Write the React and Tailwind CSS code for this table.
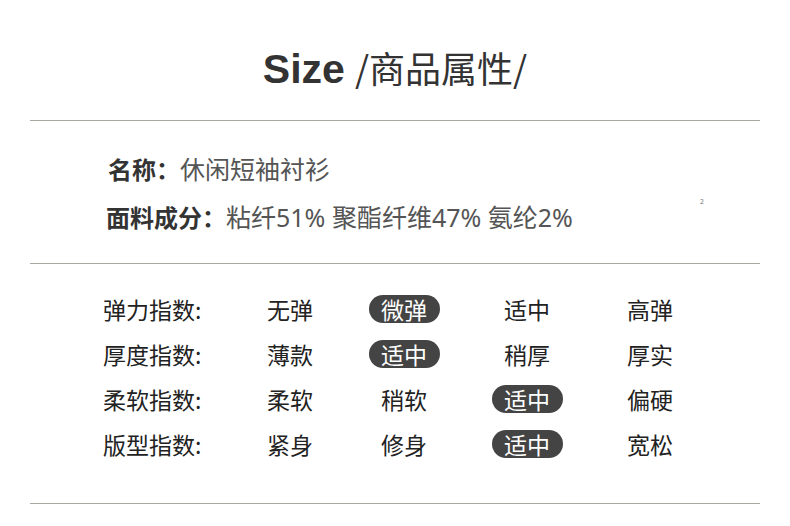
const rows = [
  { label: '弹力指数:', opts: ['无弹', '微弹', '适中', '高弹'], on: 1 },
  { label: '厚度指数:', opts: ['薄款', '适中', '稍厚', '厚实'], on: 1 },
  { label: '柔软指数:', opts: ['柔软', '稍软', '适中', '偏硬'], on: 2 },
  { label: '版型指数:', opts: ['紧身', '修身', '适中', '宽松'], on: 2 },
];

const cjk = { fontFamily: '"Noto Sans CJK SC", "Noto Sans", sans-serif' };
const mixed = { fontFamily: '"Noto Sans", "Noto Sans CJK SC", sans-serif' };

export default function App() {
  return (
    <div className="w-[790px] h-[526px] bg-white flex flex-col text-[#333]" style={cjk}>
      {/* Title */}
      <div className="h-[120px] flex items-end justify-center pb-[30px]">
        <h1 className="flex items-baseline leading-none">
          <span className="text-[41px] font-bold text-[#333]" style={{ fontFamily: '"Liberation Sans", Arial, sans-serif' }}>
            Size
          </span>
          <span className="text-[36px] ml-[10px] text-[#333]">/商品属性/</span>
        </h1>
      </div>
      <div className="mx-[30px] border-t border-[#a9a9a2]" />

      {/* Basic info */}
      <div className="relative h-[142px] pt-[34px] pl-[106px] flex flex-col gap-[20px] text-[24px] leading-[28px]">
        <div className="flex items-baseline pl-[2px]">
          <span className="font-bold text-[#333]">名称：</span>
          <span className="text-[25px] text-[#555]" style={mixed}>休闲短袖衬衫</span>
        </div>
        <div className="flex items-baseline">
          <span className="font-bold text-[#333]">面料成分：</span>
          <span className="text-[25px] text-[#555]" style={mixed}>粘纤51% 聚酯纤维47% 氨纶2%</span>
        </div>
        <span className="absolute left-[700px] top-[77px] text-[7px] leading-none text-[#777]">2</span>
      </div>
      <div className="mx-[30px] border-t border-[#a9a9a2]" />

      {/* Index table */}
      <div className="h-[239px] pt-[31px] pl-[103px] flex flex-col gap-[17px] text-[23px] leading-[28px] text-[#222]">
        {rows.map((r) => (
          <div key={r.label} className="grid grid-cols-[130px_114px_114px_132px_114px] items-center">
            <span>{r.label}</span>
            {r.opts.map((o, i) => (
              <div key={o + i} className="flex justify-center">
                {i === r.on ? (
                  <span className="h-[28px] w-[71px] rounded-full bg-[#444] text-white flex items-center justify-center">
                    {o}
                  </span>
                ) : (
                  <span>{o}</span>
                )}
              </div>
            ))}
          </div>
        ))}
      </div>
      <div className="mx-[30px] border-t border-[#a9a9a2]" />
    </div>
  );
}
